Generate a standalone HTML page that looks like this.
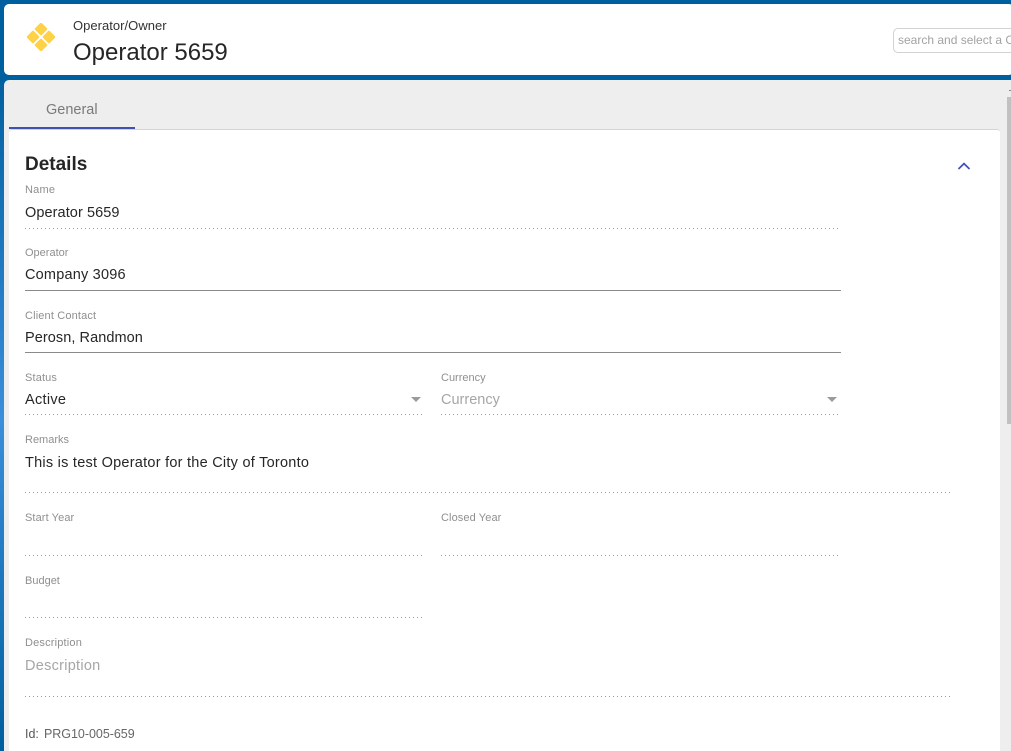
<!DOCTYPE html>
<html><head><meta charset="utf-8">
<style>
html,body{margin:0;padding:0;width:1011px;height:751px;overflow:hidden}
body{position:relative;font-family:"Liberation Sans",sans-serif;background:linear-gradient(180deg,#005f9e 0,#005f9e 70px,#3a8edb 420px,#005f9e 751px)}
div{position:absolute;white-space:nowrap;box-sizing:border-box}
.top{left:0;top:0;width:1011px;height:80px;background:#005f9e}
.hdr{left:4px;top:4px;width:1010px;height:71px;background:#fff;border-radius:5px}
.panel{left:4px;top:80px;width:1010px;height:680px;background:#eee;border-radius:5px 0 0 0}
.card{left:9px;top:129px;width:991px;height:630px;background:#fff;border-top:1px solid #d4d4d4;border-radius:3px 3px 0 0}
.lab{font-size:11px;line-height:13px;color:#8f8f8f}
.val{font-size:14.5px;line-height:18px;color:#262626}
.ph{color:#a6a6a6}
.dot{height:1px;background:repeating-linear-gradient(90deg,#999 0,#999 1px,transparent 1px,transparent 4px)}
.sol{height:1px;background:#8a8a8a}
.arrow{width:0;height:0;border-left:5.5px solid transparent;border-right:5.5px solid transparent;border-top:5px solid #9b9b9b}
</style></head><body>
<div class="top"></div>
<div class="hdr"></div>
<svg style="position:absolute;left:27px;top:22.5px" width="28" height="28" viewBox="0 0 28 28">
<g fill="#ffd147">
<rect x="9.2" y="1.2" width="9.6" height="9.6" rx="1.3" transform="rotate(45 14 6)"/>
<rect x="1.2" y="9.2" width="9.6" height="9.6" rx="1.3" transform="rotate(45 6 14)"/>
<rect x="17.2" y="9.2" width="9.6" height="9.6" rx="1.3" transform="rotate(45 22 14)"/>
<rect x="9.2" y="17.2" width="9.6" height="9.6" rx="1.3" transform="rotate(45 14 22)"/>
</g></svg>
<div style="left:73px;top:18px;font-size:13px;line-height:15px;letter-spacing:.03px;color:#333">Operator/Owner</div>
<div style="left:73px;top:39px;font-size:24px;line-height:28px;color:#262626">Operator 5659</div>
<div style="left:893px;top:28px;width:130px;height:25px;border:1px solid #d2d2d2;border-radius:5px;background:#fff;font-size:12px;line-height:22px;color:#a3a3a3;padding-left:4px;overflow:hidden">search and select a C</div>

<div class="panel"></div>
<div style="left:46px;top:101px;font-size:14.5px;line-height:18px;color:#7a7a7a">General</div>
<div class="card"></div>
<div style="left:9px;top:127px;width:126px;height:2px;background:#3f51b5"></div>
<div style="left:1000px;top:80px;width:11px;height:671px;background:#eee"></div>
<div style="left:1007px;top:97px;width:4px;height:327px;background:#c1c1c1"></div>
<div style="left:1009px;top:90px;width:2px;height:1px;background:#888"></div>

<div style="left:25px;top:153px;font-size:19px;line-height:24px;font-weight:bold;color:#262626">Details</div>
<svg style="position:absolute;left:957px;top:161px" width="14" height="10" viewBox="0 0 14 10"><path d="M1.5 8L7 2.6L12.5 8" fill="none" stroke="#3f51b5" stroke-width="1.7"/></svg>

<div class="lab" style="left:25px;top:184px;letter-spacing:.2px">Name</div>
<div class="val" style="left:25px;top:204px;letter-spacing:.08px">Operator 5659</div>
<div class="dot" style="left:25px;top:228px;width:816px"></div>

<div class="lab" style="left:25px;top:247px">Operator</div>
<div class="val" style="left:25px;top:266px;letter-spacing:.2px">Company 3096</div>
<div class="sol" style="left:25px;top:290px;width:816px"></div>

<div class="lab" style="left:25px;top:310px;letter-spacing:.15px">Client Contact</div>
<div class="val" style="left:25px;top:329px;letter-spacing:.07px">Perosn, Randmon</div>
<div class="sol" style="left:25px;top:352px;width:816px"></div>

<div class="lab" style="left:25px;top:372px;letter-spacing:.15px">Status</div>
<div class="val" style="left:25px;top:391px;letter-spacing:.3px">Active</div>
<div class="arrow" style="left:411px;top:397px"></div>
<div class="dot" style="left:25px;top:414px;width:398px"></div>

<div class="lab" style="left:441px;top:372px">Currency</div>
<div class="val ph" style="left:441px;top:391px">Currency</div>
<div class="arrow" style="left:827px;top:397px"></div>
<div class="dot" style="left:441px;top:414px;width:398px"></div>

<div class="lab" style="left:25px;top:434px">Remarks</div>
<div class="val" style="left:25px;top:454px;letter-spacing:.25px">This is test Operator for the City of Toronto</div>
<div class="dot" style="left:25px;top:492px;width:926px"></div>

<div class="lab" style="left:25px;top:512px;letter-spacing:.1px">Start Year</div>
<div class="dot" style="left:25px;top:555px;width:398px"></div>
<div class="lab" style="left:441px;top:512px;letter-spacing:.1px">Closed Year</div>
<div class="dot" style="left:441px;top:555px;width:398px"></div>

<div class="lab" style="left:25px;top:575px">Budget</div>
<div class="dot" style="left:25px;top:617px;width:398px"></div>

<div class="lab" style="left:25px;top:637px;letter-spacing:.18px">Description</div>
<div class="val ph" style="left:25px;top:657px;letter-spacing:.27px">Description</div>
<div class="dot" style="left:25px;top:696px;width:926px"></div>

<div style="left:25px;top:727px;font-size:12.5px;line-height:15px;color:#555">Id:</div>
<div style="left:44px;top:727px;font-size:12.5px;line-height:15px;letter-spacing:-.03px;color:#666">PRG10-005-659</div>
</body></html>
